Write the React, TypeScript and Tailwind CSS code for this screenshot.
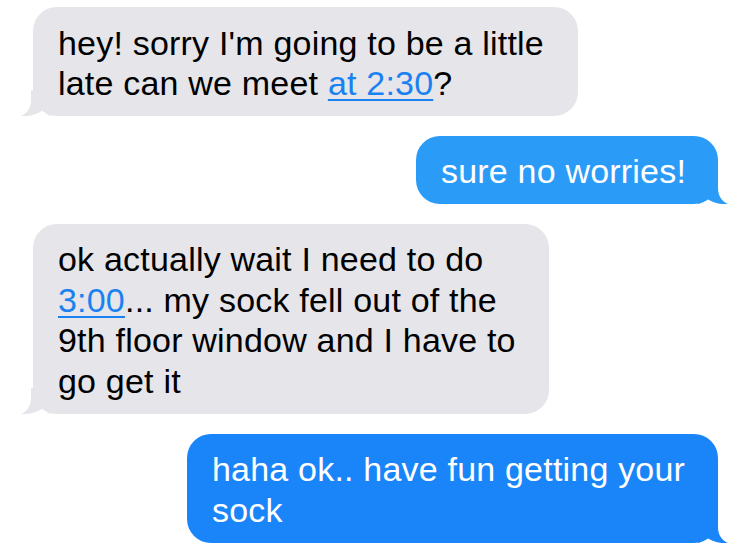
const GREY = '#e5e5ea'

type Msg = {
  id: number
  from: 'me' | 'them'
  width: string
  color: string
  lines: React.ReactNode[]
}

function Link({ children }: { children: React.ReactNode }) {
  return <span className="text-[#1a82f0] underline decoration-[1.5px] underline-offset-[4px]">{children}</span>
}

const MESSAGES: Msg[] = [
  {
    id: 1,
    from: 'them',
    width: 'w-[545px]',
    color: GREY,
    lines: ["hey! sorry I'm going to be a little", <>late can we meet <Link>at 2:30</Link>?</>]
  },
  {
    id: 2,
    from: 'me',
    width: 'w-[302px]',
    color: '#2b9bf8',
    lines: ['sure no worries!']
  },
  {
    id: 3,
    from: 'them',
    width: 'w-[516px]',
    color: GREY,
    lines: [
      'ok actually wait I need to do',
      <><Link>3:00</Link>... my sock fell out of the</>,
      '9th floor window and I have to',
      'go get it'
    ]
  },
  {
    id: 4,
    from: 'me',
    width: 'w-[531px]',
    color: '#1a85f8',
    lines: ['haha ok.. have fun getting your', 'sock']
  }
]

// bubble tail, drawn for the right side; flipped for incoming messages
function Tail({ color, left }: { color: string, left: boolean }) {
  return (
    <svg
      width="30"
      height="26"
      viewBox="0 0 30 26"
      className={left ? 'absolute bottom-0 left-[-12px] -scale-x-100' : 'absolute bottom-0 right-[-10px]'}
    >
      <path
        d="M0 0 H20 V10 C20 18 24 23.5 30 26 C23 26.8 14 25 8 20 C6 22.6 3 25.4 0 26 Z"
        fill={color}
      />
    </svg>
  )
}

export default function App() {
  return (
    <main className="w-[748px] h-[549px] bg-white overflow-hidden pt-[7px] pl-[33px] pr-[30px] font-['Liberation_Sans',Arial,sans-serif]">
      <div className="flex flex-col gap-[19.5px]">
        {MESSAGES.map(m => (
          <div
            key={m.id}
            className={`relative ${m.width} ${m.from === 'me' ? 'self-end text-white' : 'self-start text-black'} rounded-[24px] pl-[25px] pr-[20px] pt-[15.5px] pb-[12.5px] text-[34px] leading-[40.6px] tracking-[0.2px] whitespace-nowrap`}
            style={{ backgroundColor: m.color }}
          >
            <Tail color={m.color} left={m.from === 'them'} />
            {m.lines.map((l, i) => (
              <div key={i} className="relative">{l}</div>
            ))}
          </div>
        ))}
      </div>
    </main>
  )
}
